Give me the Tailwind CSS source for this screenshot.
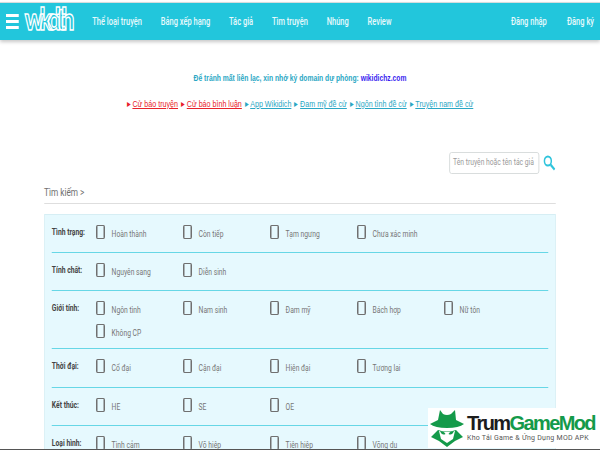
<!DOCTYPE html>
<html lang="vi">
<head>
  <meta charset="UTF-8">
  <title>Wikidich</title>
  <script src="https://cdn.jsdelivr.net/npm/@tailwindcss/browser@4"></script>
</head>
<body class="relative h-[450px] w-[600px] overflow-hidden bg-white font-['Roboto',sans-serif]">
  <!-- the page is squeezed sideways in the reference, so everything sits in an 800px wide box scaled to 600 -->
  <div class="w-[800px] origin-top-left scale-x-[0.75]">
    <header class="mt-[2px] flex h-[38px] items-center border-t border-[#d5dcdd] bg-[#22c6dc] px-[8px] text-[10px] font-medium text-[#e8fafc] shadow-[0_2px_4px_rgba(0,0,0,0.22)]">
      <div class="flex w-[17px] flex-col gap-[3px]">
        <span class="h-[3px] bg-white"></span>
        <span class="h-[3px] bg-white"></span>
        <span class="h-[3px] bg-white"></span>
      </div>
      <span class="-mt-[6px] ml-[8px] w-[72px] font-['Lato',sans-serif] text-[31px] font-black leading-none tracking-[-5.5px] text-[#22c6dc] [-webkit-text-stroke:1.5px_white]">wkdth</span>
      <nav class="ml-[18px] flex gap-[25px]">
        <a>Thể loại truyện</a>
        <a>Bảng xếp hạng</a>
        <a>Tác giả</a>
        <a>Tìm truyện</a>
        <a>Nhúng</a>
        <a>Review</a>
      </nav>
      <div class="ml-auto flex gap-[27px]">
        <a>Đăng nhập</a>
        <a>Đăng ký</a>
      </div>
    </header>

    <!-- notices -->
    <div class="mt-[32px] text-center font-['Liberation_Sans',sans-serif] leading-[12px]">
      <p class="text-[9px] font-bold text-[#2aa7c4]">Để tránh mất liên lạc, xin nhớ kỷ domain dự phòng: <span class="text-[#3b1ff0]">wikidichz.com</span></p>
      <p class="mt-[14px] flex justify-center gap-[4px] text-[9.5px]">
        <span class="text-[#e8222a]">▸ <u>Cử báo truyện</u></span>
        <span class="text-[#e8222a]">▸ <u>Cử báo bình luận</u></span>
        <span class="text-[#2aa7c4]">▸ <u>App Wikidich</u></span>
        <span class="text-[#2aa7c4]">▸ <u>Đam mỹ đề cử</u></span>
        <span class="text-[#2aa7c4]">▸ <u>Ngôn tình đề cử</u></span>
        <span class="text-[#2aa7c4]">▸ <u>Truyện nam đề cử</u></span>
      </p>
    </div>

    <!-- search box -->
    <div class="mt-[42px] flex items-center justify-end gap-[4px] pr-[59px]">
      <div class="flex h-[22px] w-[120px] items-center whitespace-nowrap rounded-[3px] border border-[#d4d8d8] pl-[4px] text-[9px] text-[#9a9a9a]">Tên truyện hoặc tên tác giả</div>
      <svg width="18" height="16" viewBox="0 0 18 16" fill="none" stroke="#2fc4dc" stroke-width="2">
        <circle cx="7.5" cy="6" r="4.6"/>
        <path d="M11.2 9.8 L16.5 14.6" stroke-width="2.6"/>
      </svg>
    </div>

    <div class="mx-[58.67px] mt-[12px] border-b border-[#dedede] pb-[3px] text-[11px] leading-[14px] text-[#6f6f6f]">Tìm kiếm &gt;</div>

    <!-- filter panel -->
    <section class="mx-[58.67px] mt-[10px] border border-[#d6eef4] bg-[#e6f9fe] px-[9.5px] text-[9px] text-[#767676]">
      <div class="flex h-[38px] border-b border-[#67d7e6] pt-[10px]">
        <b class="mt-[1px] w-[58.67px] whitespace-nowrap text-[#444]">Tình trạng:</b>
        <div class="grid grid-cols-[repeat(5,116px)]">
          <label class="flex gap-[9px]"><i class="h-[14px] w-[12px] rounded-[2px] border-x-2 border-y border-[#707070]"></i><span class="mt-[3px]">Hoàn thành</span></label>
          <label class="flex gap-[9px]"><i class="h-[14px] w-[12px] rounded-[2px] border-x-2 border-y border-[#707070]"></i><span class="mt-[3px]">Còn tiếp</span></label>
          <label class="flex gap-[9px]"><i class="h-[14px] w-[12px] rounded-[2px] border-x-2 border-y border-[#707070]"></i><span class="mt-[3px]">Tạm ngưng</span></label>
          <label class="flex gap-[9px]"><i class="h-[14px] w-[12px] rounded-[2px] border-x-2 border-y border-[#707070]"></i><span class="mt-[3px]">Chưa xác minh</span></label>
        </div>
      </div>
      <div class="flex h-[38px] border-b border-[#67d7e6] pt-[10px]">
        <b class="mt-[1px] w-[58.67px] whitespace-nowrap text-[#444]">Tính chất:</b>
        <div class="grid grid-cols-[repeat(5,116px)]">
          <label class="flex gap-[9px]"><i class="h-[14px] w-[12px] rounded-[2px] border-x-2 border-y border-[#707070]"></i><span class="mt-[3px]">Nguyên sang</span></label>
          <label class="flex gap-[9px]"><i class="h-[14px] w-[12px] rounded-[2px] border-x-2 border-y border-[#707070]"></i><span class="mt-[3px]">Diễn sinh</span></label>
        </div>
      </div>
      <div class="flex h-[58px] border-b border-[#67d7e6] pt-[10px]">
        <b class="mt-[1px] w-[58.67px] whitespace-nowrap text-[#444]">Giới tính:</b>
        <div class="grid h-fit grid-cols-[repeat(5,116px)] gap-y-[6px]">
          <label class="flex gap-[9px]"><i class="h-[14px] w-[12px] rounded-[2px] border-x-2 border-y border-[#707070]"></i><span class="mt-[3px]">Ngôn tình</span></label>
          <label class="flex gap-[9px]"><i class="h-[14px] w-[12px] rounded-[2px] border-x-2 border-y border-[#707070]"></i><span class="mt-[3px]">Nam sinh</span></label>
          <label class="flex gap-[9px]"><i class="h-[14px] w-[12px] rounded-[2px] border-x-2 border-y border-[#707070]"></i><span class="mt-[3px]">Đam mỹ</span></label>
          <label class="flex gap-[9px]"><i class="h-[14px] w-[12px] rounded-[2px] border-x-2 border-y border-[#707070]"></i><span class="mt-[3px]">Bách hợp</span></label>
          <label class="flex gap-[9px]"><i class="h-[14px] w-[12px] rounded-[2px] border-x-2 border-y border-[#707070]"></i><span class="mt-[3px]">Nữ tôn</span></label>
          <label class="flex gap-[9px]"><i class="h-[14px] w-[12px] rounded-[2px] border-x-2 border-y border-[#707070]"></i><span class="mt-[3px]">Không CP</span></label>
        </div>
      </div>
      <div class="flex h-[39px] border-b border-[#67d7e6] pt-[10px]">
        <b class="mt-[1px] w-[58.67px] whitespace-nowrap text-[#444]">Thời đại:</b>
        <div class="grid grid-cols-[repeat(5,116px)]">
          <label class="flex gap-[9px]"><i class="h-[14px] w-[12px] rounded-[2px] border-x-2 border-y border-[#707070]"></i><span class="mt-[3px]">Cổ đại</span></label>
          <label class="flex gap-[9px]"><i class="h-[14px] w-[12px] rounded-[2px] border-x-2 border-y border-[#707070]"></i><span class="mt-[3px]">Cận đại</span></label>
          <label class="flex gap-[9px]"><i class="h-[14px] w-[12px] rounded-[2px] border-x-2 border-y border-[#707070]"></i><span class="mt-[3px]">Hiện đại</span></label>
          <label class="flex gap-[9px]"><i class="h-[14px] w-[12px] rounded-[2px] border-x-2 border-y border-[#707070]"></i><span class="mt-[3px]">Tương lai</span></label>
        </div>
      </div>
      <div class="flex h-[38px] border-b border-[#67d7e6] pt-[10px]">
        <b class="mt-[1px] w-[58.67px] whitespace-nowrap text-[#444]">Kết thúc:</b>
        <div class="grid grid-cols-[repeat(5,116px)]">
          <label class="flex gap-[9px]"><i class="h-[14px] w-[12px] rounded-[2px] border-x-2 border-y border-[#707070]"></i><span class="mt-[3px]">HE</span></label>
          <label class="flex gap-[9px]"><i class="h-[14px] w-[12px] rounded-[2px] border-x-2 border-y border-[#707070]"></i><span class="mt-[3px]">SE</span></label>
          <label class="flex gap-[9px]"><i class="h-[14px] w-[12px] rounded-[2px] border-x-2 border-y border-[#707070]"></i><span class="mt-[3px]">OE</span></label>
        </div>
      </div>
      <div class="flex h-[38px] pt-[10px]">
        <b class="mt-[1px] w-[58.67px] whitespace-nowrap text-[#444]">Loại hình:</b>
        <div class="grid grid-cols-[repeat(5,116px)]">
          <label class="flex gap-[9px]"><i class="h-[14px] w-[12px] rounded-[2px] border-x-2 border-y border-[#707070]"></i><span class="mt-[3px]">Tình cảm</span></label>
          <label class="flex gap-[9px]"><i class="h-[14px] w-[12px] rounded-[2px] border-x-2 border-y border-[#707070]"></i><span class="mt-[3px]">Võ hiệp</span></label>
          <label class="flex gap-[9px]"><i class="h-[14px] w-[12px] rounded-[2px] border-x-2 border-y border-[#707070]"></i><span class="mt-[3px]">Tiên hiệp</span></label>
          <label class="flex gap-[9px]"><i class="h-[14px] w-[12px] rounded-[2px] border-x-2 border-y border-[#707070]"></i><span class="mt-[3px]">Võng du</span></label>
        </div>
      </div>
    </section>
  </div>

  <!-- watermark -->
  <div class="absolute bottom-[2px] left-[428px] flex h-[40px] w-[172px] items-center bg-white pl-[1px]">
    <svg class="shrink-0" width="36" height="38" viewBox="0 0 36 38" fill="#149a4a">
      <path d="M11 1 L14 5 Q18 7 22 5 L26 1 L27 11 L35 15 Q30 19 18 19 Q6 19 1 15 L9 11 Z"/>
      <path d="M2 28 L9 21 Q18 24 27 21 L34 28 L26 32 L18 38 L10 32 Z"/>
      <path d="M10 22 Q18 24 26 22 L24 30 L18 34 L12 30 Z" fill="#fff"/>
      <path d="M11 22 Q15 22 16.500 25 Q13 27 11 22 Z M25 22 Q21 22 19.500 25 Q23 27 25 22 Z"/>
    </svg>
    <div class="ml-[2px] w-[130px] shrink-0">
      <p class="whitespace-nowrap font-['Liberation_Sans',sans-serif] text-[20px] font-bold leading-[20px] tracking-[-1.6px] text-[#1c1c1c]">Trum<span class="text-[#149a4a]">GameMod</span></p>
      <p class="mt-[1px] whitespace-nowrap text-[7px] leading-[9px] tracking-[0.25px] text-[#555]">Kho Tải Game &amp; Ứng Dụng MOD APK</p>
    </div>
  </div>
  <div class="absolute bottom-0 left-0 h-[1px] w-full bg-[#555]"></div>
</body>
</html>
